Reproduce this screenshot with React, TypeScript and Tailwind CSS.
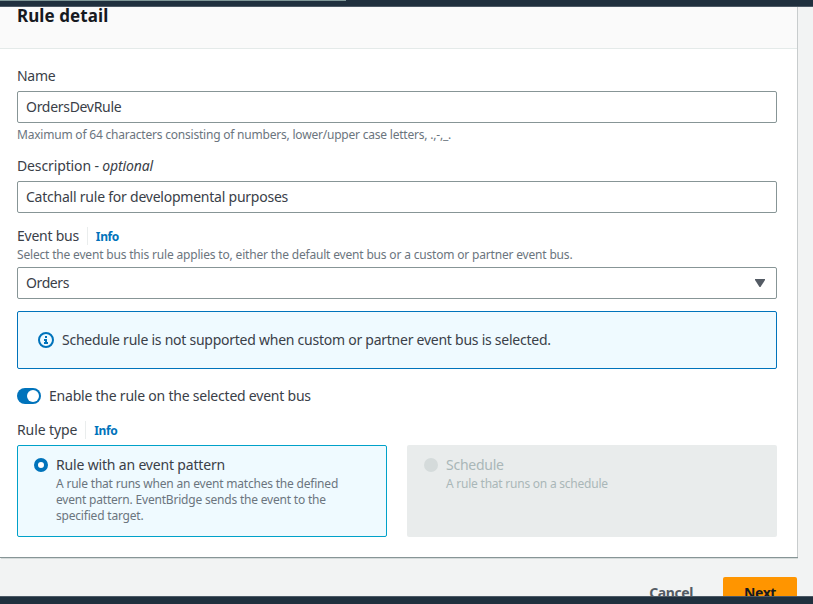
import type { ReactNode } from "react";

function InfoLink() {
  return (
    <span className="ml-2 flex h-[18px] items-center border-l border-[#eaeded] pt-0.5 pl-2 text-[12px] leading-4 font-bold tracking-[-0.4px] text-[#0073bb]">
      Info
    </span>
  );
}

function Label({ children, className = "" }: { children: ReactNode; className?: string }) {
  return <div className={`flex h-[22px] items-center text-[14px] leading-[22px] whitespace-pre ${className}`}>{children}</div>;
}

function Hint({ children, className = "" }: { children: ReactNode; className?: string }) {
  return <div className={`text-[12px] leading-4 whitespace-nowrap ${className}`}>{children}</div>;
}

function Field({ children }: { children: ReactNode }) {
  return (
    <div className="mt-1 flex h-8 items-center justify-between rounded-[2px] border border-[#879596] bg-white px-2 text-[14px] leading-[22px]">
      {children}
    </div>
  );
}

function InfoIcon() {
  return (
    <svg className="size-4 shrink-0" viewBox="0 0 16 16" fill="none" stroke="#0073bb" strokeWidth="2">
      <circle cx="8" cy="8" r="7" />
      <path d="M8 11V8H6M10 11H6M8 4v2" />
    </svg>
  );
}

export default function App() {
  return (
    <div className="flex h-[604px] w-[813px] flex-col overflow-hidden bg-[#f2f3f3] font-['Noto_Sans','Open_Sans',sans-serif] text-[#3a4048]">
      <div className="h-[7px] shrink-0 border-b border-[#4d5965] bg-[#20303e]">
        <div className="h-px w-[346px] bg-[#7f9797]" />
      </div>
      <main className="h-[589px] shrink-0 overflow-hidden">
        <section className="w-[797px] bg-white shadow-[1px_0_0_#c8cccd,0_1px_0_#879596,1px_1px_0_#879596,1px_2px_0_#d5dbdb]">
          <header className="flex h-[42px] items-start border-b border-[#e4eae9] bg-[#fafafa] pl-[17px]">
            <h2 className="-mt-0.5 text-[17px] leading-[22px] font-bold tracking-[0.08px] text-[#16191f]">Rule detail</h2>
          </header>
          <div className="flex flex-col pt-4 pr-5 pb-5 pl-[17px]">
            <Label className="tracking-[-0.3px]">Name</Label>
            <Field><span className="tracking-[-0.3px]">OrdersDevRule</span></Field>
            <Hint className="mt-1 tracking-[-0.21px] text-[#6b757e]">Maximum of 64 characters consisting of numbers, lower/upper case letters, .,-,_.</Hint>
            <Label className="mt-3 tracking-[-0.13px]">Description - <em>optional</em></Label>
            <Field><span className="tracking-[-0.23px]">Catchall rule for developmental purposes</span></Field>
            <Label className="mt-3 tracking-[-0.25px]">Event bus<InfoLink /></Label>
            <Hint className="tracking-[-0.18px] text-[#6b757e]">Select the event bus this rule applies to, either the default event bus or a custom or partner event bus.</Hint>
            <Field>
              <span className="tracking-[-0.4px]">Orders</span>
              <svg className="mr-[3px] h-2 w-2.5" viewBox="0 0 10 8" fill="#545b64"><path d="M0 0H10V1L5.5 8H4.5L0 1Z" /></svg>
            </Field>
            <div className="mt-3 flex h-[58px] items-center gap-2 rounded-[2px] border border-[#0073bb] bg-[#effaff] pl-5 text-[14px] leading-[22px]">
              <InfoIcon />
              <span className="tracking-[-0.25px]">Schedule rule is not supported when custom or partner event bus is selected.</span>
            </div>
            <div className="mt-4 flex h-[22px] items-center gap-2 text-[14px] leading-[22px]">
              <div className="flex h-4 w-6 items-center justify-end rounded-full bg-[#0073bb] pr-0.5">
                <div className="size-3 rounded-full bg-white" />
              </div>
              <span className="tracking-[-0.22px]">Enable the rule on the selected event bus</span>
            </div>
            <Label className="mt-3 tracking-[-0.1px]">Rule type<InfoLink /></Label>
            <div className="mt-1 grid grid-cols-2 gap-5">
              <div className="flex h-[92px] gap-2 rounded-[2px] border border-[#00a1c9] bg-[#effaff] pt-2 pl-4">
                <div className="mt-1 size-3.5 shrink-0 rounded-full border-4 border-[#0073bb] bg-white" />
                <div>
                  <Label className="tracking-[-0.17px]">Rule with an event pattern</Label>
                  <Hint className="tracking-[-0.2px] text-[#6b757e]">A rule that runs when an event matches the defined<br />event pattern. EventBridge sends the event to the<br />specified target.</Hint>
                </div>
              </div>
              <div className="flex h-[92px] gap-2 rounded-[2px] bg-[#e9ecec] pt-[9px] pl-[17px] text-[#aab7b8]">
                <div className="mt-1 size-3.5 shrink-0 rounded-full bg-[#d5dbdb]" />
                <div>
                  <Label className="tracking-[-0.25px]">Schedule</Label>
                  <Hint className="tracking-[-0.23px]">A rule that runs on a schedule</Hint>
                </div>
              </div>
            </div>
          </div>
        </section>
        <div className="mt-5 flex w-[797px] justify-end text-[14px] leading-8 font-bold tracking-[-0.4px]">
          <span className="mr-[30px] text-[#545b64]">Cancel</span>
          <span className="w-[74px] rounded-[2px] bg-[#ff9500] text-center text-[#16191f]">Next</span>
        </div>
      </main>
      <div className="h-2 shrink-0 border-t border-[#4d5965] bg-[#20303e]" />
    </div>
  );
}
